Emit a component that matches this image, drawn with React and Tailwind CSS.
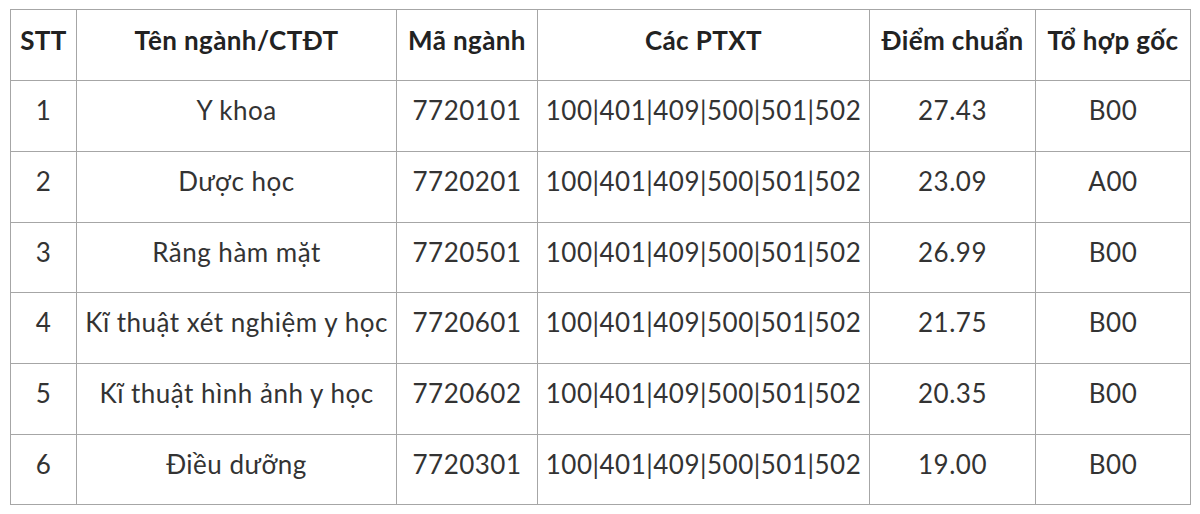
const COLS = [66, 320, 141, 332, 166, 155];

const HEAD = ["STT", "Tên ngành/CTĐT", "Mã ngành", "Các PTXT", "Điểm chuẩn", "Tổ hợp gốc"];

const ROWS = [
  { stt: 1, name: "Y khoa", code: "7720101", score: "27.43", combo: "B00", h: 71 },
  { stt: 2, name: "Dược học", code: "7720201", score: "23.09", combo: "A00", h: 71 },
  { stt: 3, name: "Răng hàm mặt", code: "7720501", score: "26.99", combo: "B00", h: 70 },
  { stt: 4, name: "Kĩ thuật xét nghiệm y học", code: "7720601", score: "21.75", combo: "B00", h: 71 },
  { stt: 5, name: "Kĩ thuật hình ảnh y học", code: "7720602", score: "20.35", combo: "B00", h: 71 },
  { stt: 6, name: "Điều dưỡng", code: "7720301", score: "19.00", combo: "B00", h: 70 },
];

const PTXT = "100|401|409|500|501|502";

export default function App() {
  return (
    <div className="bg-white w-[1200px] h-[514px] pt-[9px] pl-[10px] font-['Lato',sans-serif] text-[#333]">
      <table className="table-fixed border-collapse w-[1180px]">
        <colgroup>
          {COLS.map((w, i) => (
            <col key={i} style={{ width: w }} />
          ))}
        </colgroup>
        <thead>
          <tr className="h-[71px]">
            {HEAD.map((h) => (
              <th
                key={h}
                className="border border-[#a6a6a6] text-center align-middle pb-[10px] text-[26px] tracking-[0.4px] font-bold text-[#222] whitespace-nowrap"
              >
                {h}
              </th>
            ))}
          </tr>
        </thead>
        <tbody>
          {ROWS.map((r) => (
            <tr key={r.stt} style={{ height: r.h }}>
              {[r.stt, r.name, r.code, PTXT, r.score, r.combo].map((v, i) => (
                <td
                  key={i}
                  className="border border-[#a6a6a6] text-center align-middle pb-[11px] text-[26px] tracking-[0.5px] whitespace-nowrap"
                >
                  {v}
                </td>
              ))}
            </tr>
          ))}
        </tbody>
      </table>
    </div>
  );
}
